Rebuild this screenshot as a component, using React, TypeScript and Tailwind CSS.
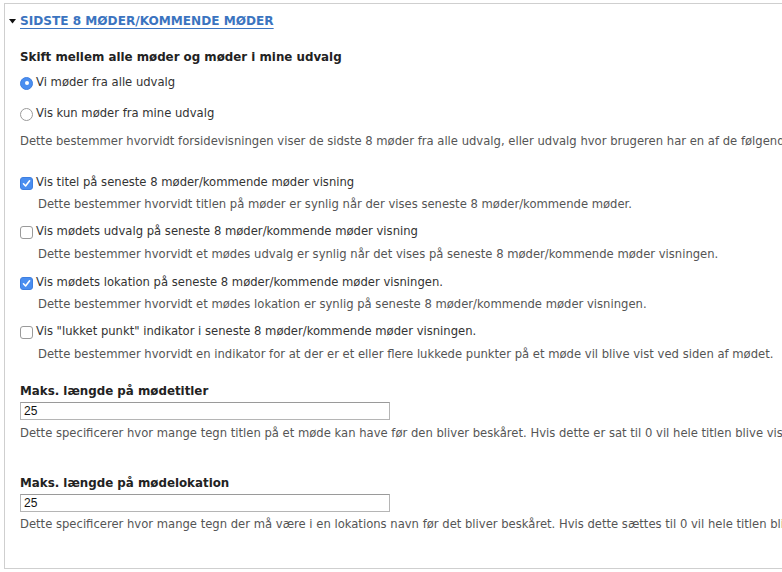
import React from "react";

const font = { fontFamily: '"DejaVu Sans", Verdana, sans-serif' };

function Radio({ checked }: { checked?: boolean }) {
  return checked ? (
    <span className="inline-flex h-[13px] w-[13px] shrink-0 items-center justify-center rounded-full bg-[#4a8ef0] border border-[#3f7fe0]">
      <span className="h-[4px] w-[4px] rounded-full bg-white" />
    </span>
  ) : (
    <span className="inline-block h-[13px] w-[13px] shrink-0 rounded-full border border-[#9a9a9a] bg-white" />
  );
}

function Check({ checked }: { checked?: boolean }) {
  return checked ? (
    <span className="inline-flex h-[13px] w-[13px] shrink-0 items-center justify-center rounded-[3px] bg-[#4a8ef0] border border-[#3f7fe0]">
      <svg width="9" height="9" viewBox="0 0 9 9">
        <path d="M1.5 4.8 L3.6 7 L7.6 1.8" fill="none" stroke="white" strokeWidth="1.6" strokeLinecap="round" strokeLinejoin="round" />
      </svg>
    </span>
  ) : (
    <span className="inline-block h-[13px] w-[13px] shrink-0 rounded-[3px] border border-[#9a9a9a] bg-white" />
  );
}

function OptionRow({ children, control, className }: { children: React.ReactNode; control: React.ReactNode; className?: string }) {
  return (
    <div className={`flex h-[18px] items-center gap-[3px] whitespace-nowrap text-[11.6px] text-[#333] ${className ?? ""}`}>
      {control}
      <span>{children}</span>
    </div>
  );
}

function Desc({ children, className }: { children: React.ReactNode; className?: string }) {
  return (
    <div className={`h-[18px] whitespace-nowrap text-[11.6px] leading-[18px] text-[#555] ${className ?? ""}`}>{children}</div>
  );
}

function Label({ children, className }: { children: React.ReactNode; className?: string }) {
  return (
    <div className={`h-[18px] whitespace-nowrap text-[11.85px] font-bold leading-[18px] text-[#222] ${className ?? ""}`}>{children}</div>
  );
}

function TextInput({ value }: { value: string }) {
  return (
    <div
      className="mt-[2px] flex h-[18px] w-[370px] items-center border border-[#b5b5b5] border-t-[#9a9a9a] bg-white pl-[3px] text-[12px] text-[#111]"
      style={{ fontFamily: '"Liberation Sans", Arial, sans-serif' }}
    >
      {value}
    </div>
  );
}

export default function App() {
  return (
    <div className="relative h-[572px] w-[782px] overflow-hidden bg-white" style={font}>
      <div className="ml-[4px] mt-[3px] h-[566px] w-[820px] border border-[#cfcfcf]">
        <div className="mt-[8px] flex h-[18px] items-center pl-[4px]">
          <svg width="7" height="5" viewBox="0 0 7 5" className="mr-[4px]">
            <path d="M0 0 L7 0 L3.5 4.5 Z" fill="#111" />
          </svg>
          <span className="whitespace-nowrap text-[12.1px] font-bold uppercase leading-[18px] text-[#3b74c0] underline underline-offset-[3px]">
            Sidste 8 møder/kommende møder
          </span>
        </div>
        <div className="pl-[15px]">
          <Label className="mt-[18px]">Skift mellem alle møder og møder i mine udvalg</Label>
          <OptionRow className="mt-[8px]" control={<Radio checked />}>Vi møder fra alle udvalg</OptionRow>
          <OptionRow className="mt-[13px]" control={<Radio />}>Vis kun møder fra mine udvalg</OptionRow>
          <Desc className="mt-[9px]">
            Dette bestemmer hvorvidt forsidevisningen viser de sidste 8 møder fra alle udvalg, eller udvalg hvor brugeren har en af de følgende roller.
          </Desc>

          <OptionRow className="mt-[24px]" control={<Check checked />}>Vis titel på seneste 8 møder/kommende møder visning</OptionRow>
          <Desc className="mt-[3px] pl-[18px]">Dette bestemmer hvorvidt titlen på møder er synlig når der vises seneste 8 møder/kommende møder.</Desc>

          <OptionRow className="mt-[10px]" control={<Check />}>Vis mødets udvalg på seneste 8 møder/kommende møder visning</OptionRow>
          <Desc className="mt-[4px] pl-[18px]">Dette bestemmer hvorvidt et mødes udvalg er synlig når det vises på seneste 8 møder/kommende møder visningen.</Desc>

          <OptionRow className="mt-[11px]" control={<Check checked />}>Vis mødets lokation på seneste 8 møder/kommende møder visningen.</OptionRow>
          <Desc className="mt-[3px] pl-[18px]">Dette bestemmer hvorvidt et mødes lokation er synlig på seneste 8 møder/kommende møder visningen.</Desc>

          <OptionRow className="mt-[10px]" control={<Check />}>Vis "lukket punkt" indikator i seneste 8 møder/kommende møder visningen.</OptionRow>
          <Desc className="mt-[4px] pl-[18px]">Dette bestemmer hvorvidt en indikator for at der er et eller flere lukkede punkter på et møde vil blive vist ved siden af mødet.</Desc>

          <Label className="mt-[19px]">Maks. længde på mødetitler</Label>
          <TextInput value="25" />
          <Desc className="mt-[4px]">
            Dette specificerer hvor mange tegn titlen på et møde kan have før den bliver beskåret. Hvis dette er sat til 0 vil hele titlen blive vist.
          </Desc>

          <Label className="mt-[32px]">Maks. længde på mødelokation</Label>
          <TextInput value="25" />
          <Desc className="mt-[3px]">
            Dette specificerer hvor mange tegn der må være i en lokations navn før det bliver beskåret. Hvis dette sættes til 0 vil hele titlen blive vist.
          </Desc>
        </div>
      </div>
    </div>
  );
}
